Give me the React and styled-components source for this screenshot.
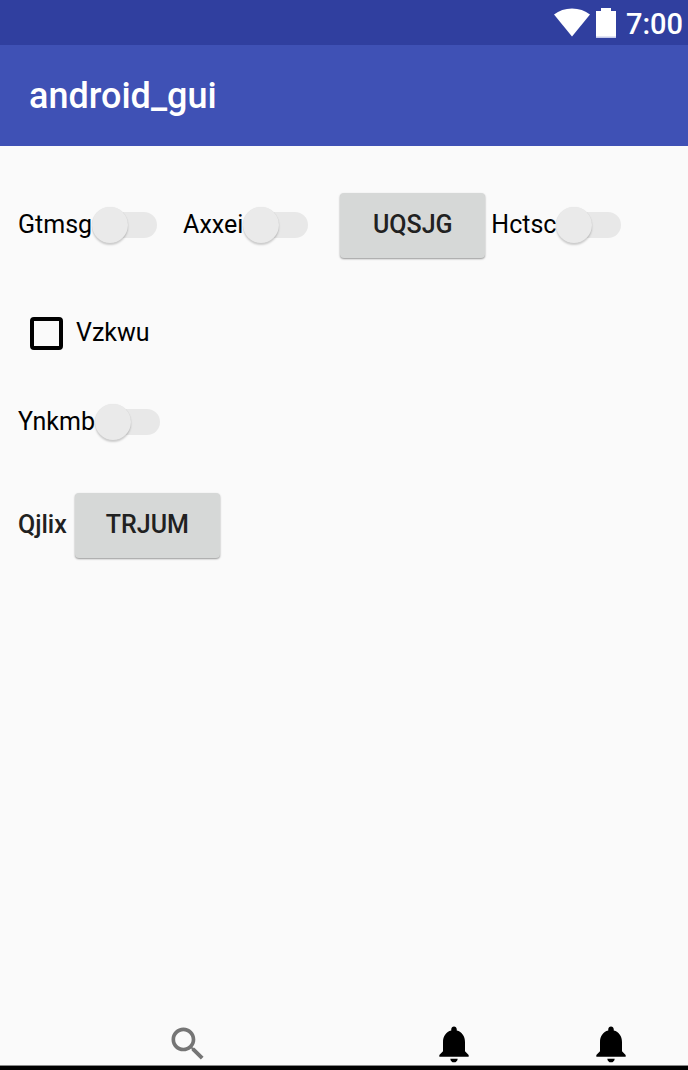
import React from "react";
import styled, { createGlobalStyle } from "styled-components";

const GlobalStyle = createGlobalStyle`
  *, *::before, *::after { box-sizing: border-box; }
  body {
    margin: 0;
    background: #fafafa;
    color: #000;
    font-family: Roboto, "Liberation Sans", sans-serif;
    font-size: 25px;
    line-height: 30px;
  }
`;

const Screen = styled.div`
  display: flex;
  flex-direction: column;
  min-height: 100vh;
`;

const StatusBar = styled.div`
  display: flex;
  align-items: center;
  justify-content: flex-end;
  height: 45px;
  padding-right: 5px;
  background: #303f9f;
  color: #fff;
`;

const WifiIcon = styled.svg`
  width: 36px;
  height: 30px;
  margin-right: 6px;
`;

const BatteryIcon = styled.svg`
  width: 20px;
  height: 30px;
  margin-right: 10px;
`;

const Clock = styled.time`
  padding-top: 3px;
  font-size: 29px;
  font-weight: 500;
  line-height: 36px;
`;

const AppBar = styled.header`
  display: flex;
  align-items: center;
  height: 101px;
  padding: 0 29px;
  background: #3f51b5;
  color: #fff;
`;

const Title = styled.h1`
  margin: 0;
  font-size: 36px;
  font-weight: 500;
  line-height: 44px;
`;

const Content = styled.main`
  flex: 1;
  padding: 46px 18px 0;
`;

const Row = styled.div`
  display: flex;
  align-items: center;
  min-height: ${(p) => p.$height || 66}px;
  margin-bottom: ${(p) => p.$below || 0}px;
  padding-left: ${(p) => p.$inset || 0}px;
`;

const SwitchLabel = styled.label`
  display: flex;
  align-items: center;
  margin-right: ${(p) => p.$after || 0}px;
`;

const SwitchInput = styled.input`
  appearance: none;
  display: grid;
  align-items: center;
  width: 65px;
  height: 36px;
  margin: 0;

  &::before,
  &::after {
    content: "";
    grid-area: 1 / 1;
  }
  &::before {
    height: 26px;
    margin-left: 10px;
    border-radius: 13px;
    background: #e8e8e8;
  }
  &::after {
    width: 36px;
    height: 36px;
    border-radius: 50%;
    background: #eaeaea;
    box-shadow: 0 2px 2px rgba(0, 0, 0, 0.18), 0 0 1px rgba(0, 0, 0, 0.1);
  }
  &:checked::after {
    justify-self: end;
  }
`;

const RaisedButton = styled.button`
  width: 145px;
  height: 65px;
  margin-right: 6px;
  padding: 0;
  border: 0;
  border-radius: 4px;
  background: #d6d8d7;
  box-shadow: 0 1px 2px rgba(0, 0, 0, 0.4);
  color: #212121;
  font: inherit;
  font-weight: 500;
  text-transform: uppercase;
`;

const CheckLabel = styled.label`
  display: flex;
  align-items: center;
  gap: 13px;
`;

const CheckInput = styled.input`
  appearance: none;
  width: 33px;
  height: 33px;
  margin: 0;
  border: 4px solid #000;
  border-radius: 4px;

  &:checked {
    background: #000;
  }
`;

const Caption = styled.span`
  margin-right: 8px;
  color: #212121;
  font-weight: 500;
`;

const BottomNav = styled.nav`
  display: grid;
  grid-template-columns: 374fr 160fr 154fr;
  justify-items: center;
  padding-left: 1px;
  border-bottom: 4px solid #000;
  box-shadow: inset 0 -1px #888;
`;

const IconButton = styled.button`
  display: flex;
  padding: 0;
  border: 0;
  background: none;
  color: ${(p) => p.$color};
`;

const Icon = styled.svg`
  width: 44px;
  height: 44px;
  fill: currentColor;
`;

function Switch({ label, after }) {
  return (
    <SwitchLabel $after={after}>
      {label}
      <SwitchInput type="checkbox" role="switch" />
    </SwitchLabel>
  );
}

function Bell() {
  return (
    <IconButton type="button" aria-label="Notifications" $color="#000">
      <Icon viewBox="0 0 24 24">
        <path d="M12 22c1.1 0 2-.9 2-2h-4c0 1.1.89 2 2 2zm6-6v-5c0-3.07-1.64-5.64-4.5-6.32V4c0-.83-.67-1.5-1.5-1.5s-1.5.67-1.5 1.5v.68C7.63 5.36 6 7.92 6 11v5l-2 2v1h16v-1l-2-2z" />
      </Icon>
    </IconButton>
  );
}

export default function App() {
  return (
    <Screen>
      <GlobalStyle />
      <StatusBar>
        <WifiIcon viewBox="0 0 36 30" aria-hidden="true">
          <path d="M0 6.5C5 2.5 11 .5 18 .5S31 2.5 36 6.5L18 28.5Z" fill="#fff" />
        </WifiIcon>
        <BatteryIcon viewBox="0 0 20 30" aria-hidden="true">
          <path d="M5 0h10v3h5v27H0V3h5z" fill="#fff" />
          <path d="M0 28.5h20v1.5H0z" fill="#c5cae9" />
        </BatteryIcon>
        <Clock>7:00</Clock>
      </StatusBar>
      <AppBar>
        <Title>android_gui</Title>
      </AppBar>
      <Content>
        <Row $below={49}>
          <Switch label="Gtmsg" after={26} />
          <Switch label="Axxei" after={32} />
          <RaisedButton type="button">Uqsjg</RaisedButton>
          <Switch label="Hctsc" />
        </Row>
        <Row $height={52} $inset={12} $below={45}>
          <CheckLabel>
            <CheckInput type="checkbox" />
            Vzkwu
          </CheckLabel>
        </Row>
        <Row $height={36} $below={52}>
          <Switch label="Ynkmb" />
        </Row>
        <Row>
          <Caption>Qjlix</Caption>
          <RaisedButton type="button">Trjum</RaisedButton>
        </Row>
      </Content>
      <BottomNav>
        <IconButton type="button" aria-label="Search" $color="#757575">
          <Icon viewBox="0 0 24 24">
            <path d="M15.5 14h-.79l-.28-.27C15.41 12.59 16 11.11 16 9.5 16 5.91 13.09 3 9.5 3S3 5.91 3 9.5 5.91 16 9.5 16c1.61 0 3.09-.59 4.23-1.57l.27.28v.79l5 4.99L20.49 19l-4.99-5zm-6 0C7.01 14 5 11.99 5 9.5S7.01 5 9.5 5 14 7.01 14 9.5 11.99 14 9.5 14z" />
          </Icon>
        </IconButton>
        <Bell />
        <Bell />
      </BottomNav>
    </Screen>
  );
}
